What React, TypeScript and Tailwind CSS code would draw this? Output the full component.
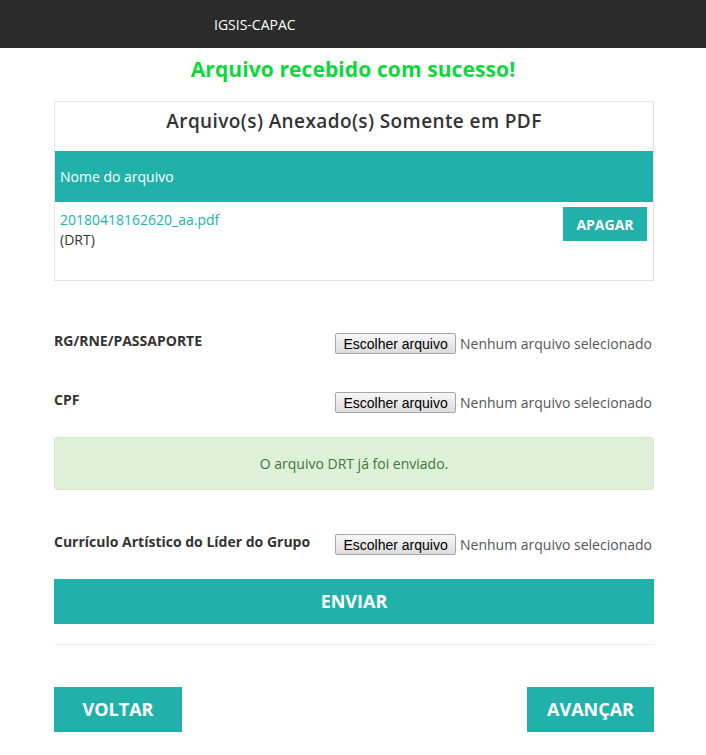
import React from 'react';

const FileField: React.FC<{ label: string }> = ({ label }) => (
  <div className="flex items-start justify-between">
    <span className="text-[14px] font-bold leading-[20px] text-[#333]">{label}</span>
    <div className="flex items-center pr-[2px] pt-[2px]">
      <button className="h-[21px] w-[121px] rounded-[2px] border border-[#a6a6a6] bg-gradient-to-b from-[#f7f7f7] to-[#dcdcdc] font-['Liberation_Sans',Arial,sans-serif] text-[14px] leading-none text-black">
        Escolher arquivo
      </button>
      <span className="ml-[4px] text-[14px] text-[#555]">Nenhum arquivo selecionado</span>
    </div>
  </div>
);

export default function App() {
  return (
    <div className="min-h-[755px] bg-white font-['Open_Sans',sans-serif] text-[#333]">
      {/* top bar */}
      <div className="flex h-[48px] items-center bg-[#2b2b2b] pl-[214px]">
        <span className="text-[14px] text-white">IGSIS-CAPAC</span>
      </div>

      <h2 className="mt-[8px] text-center text-[21px] font-bold leading-[26px] tracking-[0.1px] text-[#0ad93a]">
        Arquivo recebido com sucesso!
      </h2>

      <div className="ml-[54px] mt-[19px] w-[600px]">
        {/* attached files */}
        <div className="h-[180px] border border-[#e3e3e3]">
          <h3 className="pt-[7px] text-center text-[19px] font-semibold leading-[24px] tracking-[0.4px] text-[#333]">
            Arquivo(s) Anexado(s) Somente em PDF
          </h3>
          <div className="mt-[18px] flex h-[51px] items-center bg-[#20b2aa] px-[5px] text-[14px] text-white">
            Nome do arquivo
          </div>
          <div className="flex justify-between pl-[5px] pr-[6px] pt-[5px]">
            <div className="pt-[3px] text-[14px] leading-[20px]">
              <a className="text-[#20b2aa]">20180418162620_aa.pdf</a>
              <div className="text-[#333]">(DRT)</div>
            </div>
            <button className="h-[34px] w-[84px] bg-[#20b2aa] text-[14px] font-bold text-white">APAGAR</button>
          </div>
        </div>

        <div className="mt-[50px]">
          <FileField label="RG/RNE/PASSAPORTE" />
        </div>
        <div className="mt-[36px]">
          <FileField label="CPF" />
        </div>

        <div className="mt-[24px] flex h-[53px] items-center justify-center rounded-[3px] border border-[#d6e9c6] bg-[#dff0d8] text-[14px] text-[#3c763d]">
          O arquivo DRT já foi enviado.
        </div>

        <div className="mt-[42px]">
          <FileField label="Currículo Artístico do Líder do Grupo" />
        </div>

        <button className="mt-[24px] h-[45px] w-full bg-[#20b2aa] text-[18px] font-bold text-white">ENVIAR</button>

        <hr className="mt-[20px] border-t border-[#eee]" />

        <div className="mt-[42px] flex justify-between">
          <button className="h-[45px] w-[128px] bg-[#20b2aa] text-[18px] font-bold text-white">VOLTAR</button>
          <button className="h-[45px] w-[127px] bg-[#20b2aa] text-[18px] font-bold text-white">AVANÇAR</button>
        </div>
      </div>
    </div>
  );
}
